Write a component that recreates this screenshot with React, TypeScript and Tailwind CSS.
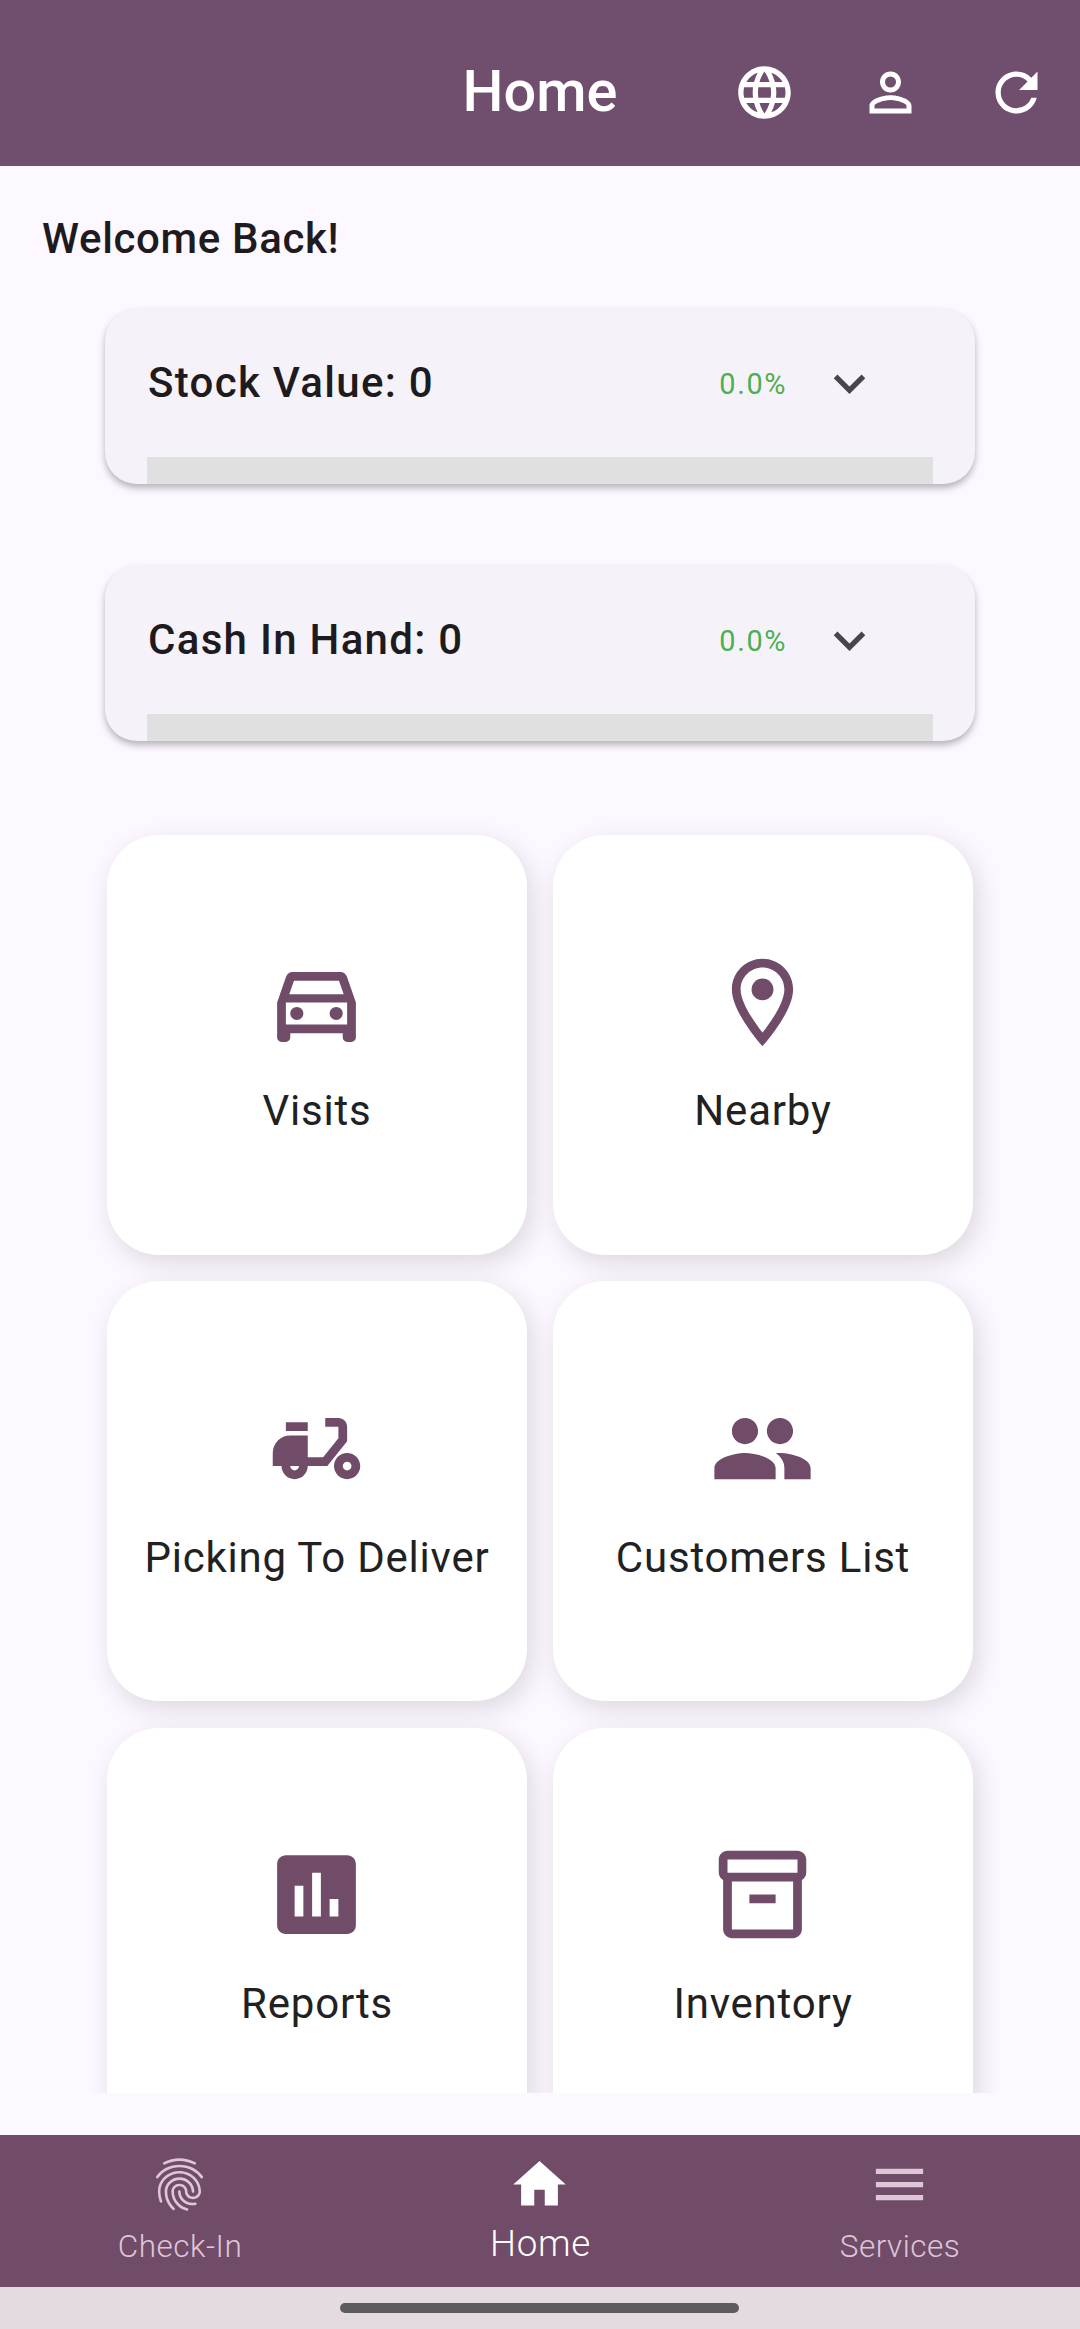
import React from 'react';
import type { IconType } from 'react-icons';
import {
  MdAssessment,
  MdDeliveryDining,
  MdExpandMore,
  MdFingerprint,
  MdHome,
  MdLanguage,
  MdMenu,
  MdOutlineDirectionsCar,
  MdOutlineInventory2,
  MdOutlineLocationOn,
  MdPeople,
  MdPersonOutline,
  MdRefresh,
} from 'react-icons/md';

const tiles: { label: string; icon: IconType }[] = [
  { label: 'Visits', icon: MdOutlineDirectionsCar },
  { label: 'Nearby', icon: MdOutlineLocationOn },
  { label: 'Picking To Deliver', icon: MdDeliveryDining },
  { label: 'Customers List', icon: MdPeople },
  { label: 'Reports', icon: MdAssessment },
  { label: 'Inventory', icon: MdOutlineInventory2 },
];

function Header() {
  return (
    <header className="grid h-[166px] shrink-0 grid-cols-3 items-center bg-[#704e6e] pt-[18px] text-white">
      <h1 className="col-start-2 pb-[2px] text-center text-[57.75px] leading-[74px] font-medium">Home</h1>
      <div className="flex items-center justify-end gap-[63px] pr-[32px]">
        <MdLanguage className="h-[63px] w-[63px] shrink-0" />
        <MdPersonOutline className="h-[63px] w-[63px] shrink-0" />
        <MdRefresh className="h-[63px] w-[63px] shrink-0" />
      </div>
    </header>
  );
}

function StatCard({ title, change }: { title: string; change: string }) {
  return (
    <div className="flex h-[175px] flex-col overflow-hidden rounded-[32px] bg-[#f6f2f9] px-[42px] shadow-[0_4px_7px_rgba(0,0,0,0.28)]">
      <div className="flex h-[148px] items-center pr-[52px] pl-px">
        <span className="grow pb-[2px] text-[42px] leading-[63px] font-medium tracking-[1.3px]">{title}</span>
        <span className="mt-[4px] mr-[31px] text-[28.9px] tracking-[1.6px] text-[#4caf50]">{change}</span>
        <MdExpandMore className="h-[63px] w-[63px] text-[#49454f]" />
      </div>
      <div className="h-[27px] w-[786px] bg-[#e0e0e0]" />
    </div>
  );
}

function Tile({ label, icon: Icon }: { label: string; icon: IconType }) {
  return (
    <div className="flex h-[420px] flex-col items-center rounded-[52px] bg-white pt-[114.6px] text-[#212121] shadow-[5px_8px_26px_rgba(0,0,0,0.13)]">
      <Icon className="mr-px h-[105px] w-[105px] text-[#714c68]" />
      <span className="mt-[24.9px] text-[42px] leading-[63px] tracking-[0.8px] whitespace-nowrap">{label}</span>
    </div>
  );
}

function NavItem({ label, icon: Icon, active }: { label: string; icon: IconType; active?: boolean }) {
  return (
    <div className={`flex flex-1 flex-col items-center pt-[18px] font-light ${active ? 'text-white' : 'text-[#dcc6d8]'}`}>
      <Icon className="mr-px h-[63px] w-[63px]" />
      <span className={active ? 'mt-[2px] ml-px text-[36.75px] leading-[52px] tracking-[0.7px]' : 'mt-[5px] text-[31.5px] leading-[52px] tracking-[0.5px]'}>
        {label}
      </span>
    </div>
  );
}

export default function App() {
  return (
    <div className="flex h-[2329px] w-[1080px] flex-col overflow-hidden bg-[#fdf7ff] font-['Roboto',sans-serif] text-[#1d1b20]">
      <Header />

      <main className="flex h-[1927px] shrink-0 flex-col overflow-hidden">
        <p className="mt-[41px] ml-[42px] text-[42px] leading-[63px] font-medium tracking-[0.65px]">Welcome Back!</p>

        <div className="mx-[105px] mt-[39px] flex flex-col gap-[82px]">
          <StatCard title="Stock Value: 0" change="0.0%" />
          <StatCard title="Cash In Hand: 0" change="0.0%" />
        </div>

        <div className="mt-[54px] grid grid-cols-[420px_420px] content-start justify-center gap-x-[26px] gap-y-[26.25px] px-[79px] pt-[40px]">
          {tiles.map((tile) => (
            <Tile key={tile.label} label={tile.label} icon={tile.icon} />
          ))}
        </div>
      </main>

      <nav className="mt-[42px] flex h-[152px] shrink-0 bg-[#714c68]">
        <NavItem label="Check-In" icon={MdFingerprint} />
        <NavItem label="Home" icon={MdHome} active />
        <NavItem label="Services" icon={MdMenu} />
      </nav>

      <div className="flex h-[42px] shrink-0 justify-center bg-[#e4dbe2] pt-[16px] pr-[2px]">
        <div className="h-[10px] w-[399px] rounded-full bg-[#5e5b5e]" />
      </div>
    </div>
  );
}
